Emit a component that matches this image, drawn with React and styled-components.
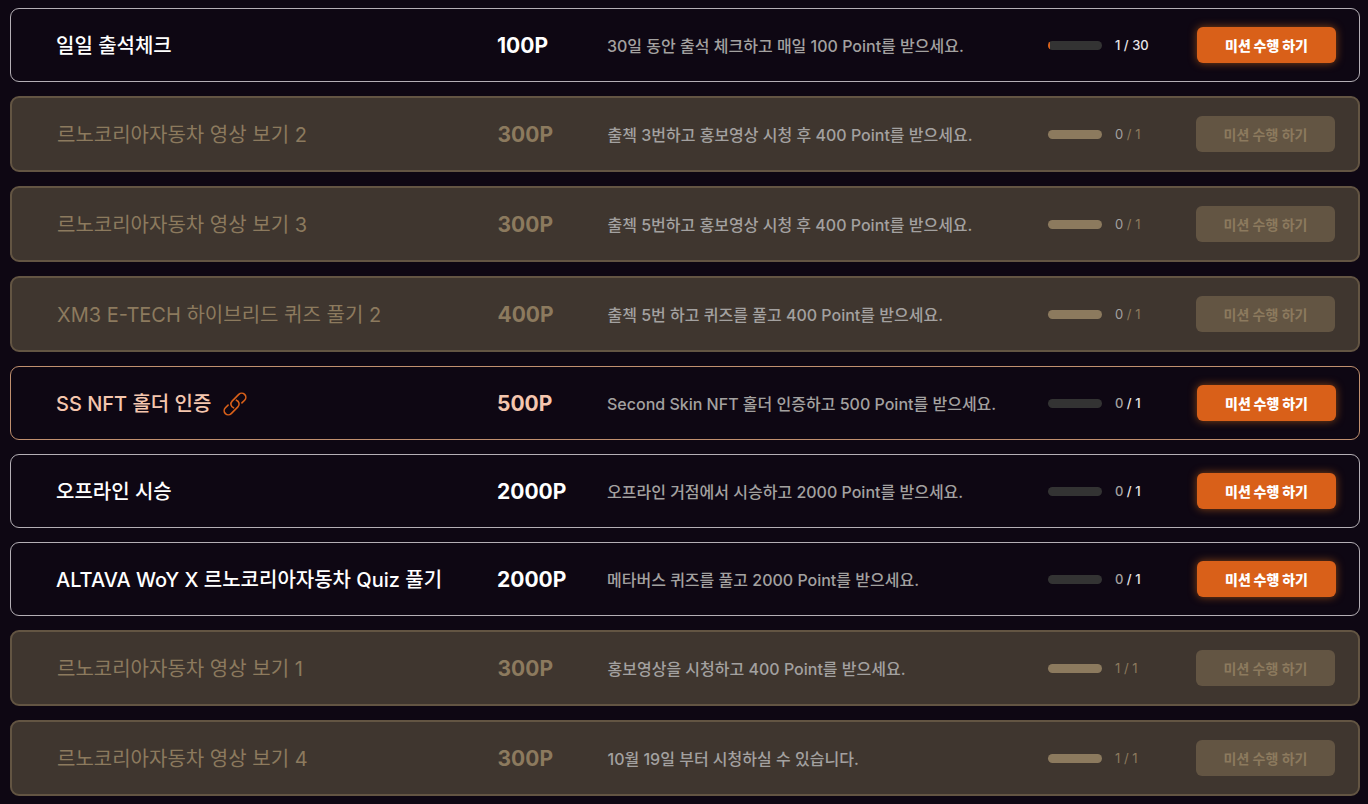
import React from "react";
import styled, { createGlobalStyle, css } from "styled-components";

const GlobalStyle = createGlobalStyle`
  *, *::before, *::after { box-sizing: border-box; }
  body {
    margin: 0;
    background: #0e0713;
    font-family: Inter, "Noto Sans CJK KR", sans-serif;
  }
`;

const tones = {
  open: css`
    --border: #b4afb5;
    --title: #ffffff;
    --point: #ffffff;
    --total: #e8e6e8;
    --title-weight: 500;
    --count-column: 82px;
  `,
  holder: css`
    --border: #c0906f;
    --title: #f5c6ae;
    --point: #f5c6ae;
    --total: #e8e6e8;
    --title-weight: 500;
    --count-column: 82px;
  `,
  closed: css`
    --border: #635543;
    --title: #8c7a5e;
    --point: #8c7a5e;
    --total: #8c7a5e;
    --title-weight: 400;
    --count-column: 81px;
  `,
};

const MissionList = styled.ul`
  display: flex;
  flex-direction: column;
  gap: 14px;
  margin: 0;
  padding: 8px 8px 8px 10px;
  list-style: none;
`;

const MissionRow = styled.li`
  ${({ $tone }) => tones[$tone]}
  display: grid;
  grid-template-columns: minmax(0, 1fr) 110px minmax(0, 1fr) 67px var(--count-column) 139px;
  align-items: center;
  padding: 18px 23px 18px 45px;
  border: ${({ $tone }) => ($tone === "closed" ? "2px" : "1px")} solid var(--border);
  border-radius: 9px;
  background: ${({ $tone }) => ($tone === "closed" ? "#3f362f" : "transparent")};
  white-space: nowrap;
`;

const Title = styled.h2`
  display: flex;
  align-items: center;
  gap: 12px;
  margin: 0;
  padding-top: 2px;
  color: var(--title);
  font-size: 20px;
  font-weight: var(--title-weight);
  line-height: 28px;
`;

const Point = styled.strong`
  padding-top: 2px;
  color: var(--point);
  font-size: 21px;
  font-weight: 700;
  line-height: 28px;
`;

const Description = styled.p`
  margin: 0;
  padding-top: 2px;
  color: #a3a1a0;
  font-size: 16px;
  font-weight: 500;
  line-height: 24px;
`;

const Track = styled.div`
  width: 54px;
  height: 9px;
  overflow: hidden;
  border-radius: 5px;
  background: ${({ $closed }) => ($closed ? "#8c7a5e" : "#333333")};
`;

const Fill = styled.div`
  height: 100%;
  background: #d96019;
`;

const Count = styled.span`
  color: var(--total);
  font-size: 13px;
  font-weight: ${({ $closed }) => ($closed ? 400 : 500)};
  line-height: 20px;
`;

const Done = styled.span`
  color: ${({ $zero }) => ($zero ? "#a3a1a0" : "inherit")};
`;

const MissionButton = styled.button`
  height: 36px;
  padding: 2px 0 0;
  border: 0;
  border-radius: 6px;
  background: #d96019;
  box-shadow: 0 0 8px rgba(217, 110, 25, 0.6);
  color: #ffffff;
  font-family: inherit;
  font-size: 14px;
  font-weight: 900;
  line-height: 20px;
  cursor: pointer;

  &:disabled {
    background: #635543;
    box-shadow: none;
    color: #8c7a5e;
    font-weight: 700;
    cursor: default;
  }
`;

const ChainIcon = () => (
  <svg
    width="24"
    height="24"
    viewBox="0 0 24 24"
    fill="none"
    stroke="#d96019"
    strokeWidth="1.6"
    strokeLinecap="round"
    aria-hidden="true"
  >
    <path d="M18.9 10.9L21.6 8.2A4.1 4.1 0 0 0 15.8 2.4L9.1 9.1A4.1 4.1 0 0 0 10.6 15.85" />
    <path d="M5.1 13.1L2.4 15.8A4.1 4.1 0 0 0 8.2 21.6L14.9 14.9A4.1 4.1 0 0 0 13.4 8.15" />
  </svg>
);

const missions = [
  { title: "일일 출석체크", point: 100, text: "30일 동안 출석 체크하고 매일 100 Point를 받으세요.", done: 1, total: 30, tone: "open" },
  { title: "르노코리아자동차 영상 보기 2", point: 300, text: "출첵 3번하고 홍보영상 시청 후 400 Point를 받으세요.", done: 0, total: 1, tone: "closed" },
  { title: "르노코리아자동차 영상 보기 3", point: 300, text: "출첵 5번하고 홍보영상 시청 후 400 Point를 받으세요.", done: 0, total: 1, tone: "closed" },
  { title: "XM3 E-TECH 하이브리드 퀴즈 풀기 2", point: 400, text: "출첵 5번 하고 퀴즈를 풀고 400 Point를 받으세요.", done: 0, total: 1, tone: "closed" },
  { title: "SS NFT 홀더 인증", point: 500, text: "Second Skin NFT 홀더 인증하고 500 Point를 받으세요.", done: 0, total: 1, tone: "holder" },
  { title: "오프라인 시승", point: 2000, text: "오프라인 거점에서 시승하고 2000 Point를 받으세요.", done: 0, total: 1, tone: "open" },
  { title: "ALTAVA WoY X 르노코리아자동차 Quiz 풀기", point: 2000, text: "메타버스 퀴즈를 풀고 2000 Point를 받으세요.", done: 0, total: 1, tone: "open" },
  { title: "르노코리아자동차 영상 보기 1", point: 300, text: "홍보영상을 시청하고 400 Point를 받으세요.", done: 1, total: 1, tone: "closed" },
  { title: "르노코리아자동차 영상 보기 4", point: 300, text: "10월 19일 부터 시청하실 수 있습니다.", done: 1, total: 1, tone: "closed" },
];

function Mission({ title, point, text, done, total, tone }) {
  const closed = tone === "closed";
  return (
    <MissionRow $tone={tone}>
      <Title>
        {title}
        {tone === "holder" && <ChainIcon />}
      </Title>
      <Point>{point}P</Point>
      <Description>{text}</Description>
      <Track
        $closed={closed}
        role="progressbar"
        aria-label={title}
        aria-valuenow={done}
        aria-valuemin={0}
        aria-valuemax={total}
      >
        {!closed && <Fill style={{ width: `${(done / total) * 100}%` }} />}
      </Track>
      <Count $closed={closed}>
        <Done $zero={done === 0}>{done}</Done> / {total}
      </Count>
      <MissionButton type="button" disabled={closed}>
        미션 수행 하기
      </MissionButton>
    </MissionRow>
  );
}

export default function App() {
  return (
    <>
      <GlobalStyle />
      <MissionList>
        {missions.map((mission) => (
          <Mission key={mission.title} {...mission} />
        ))}
      </MissionList>
    </>
  );
}
